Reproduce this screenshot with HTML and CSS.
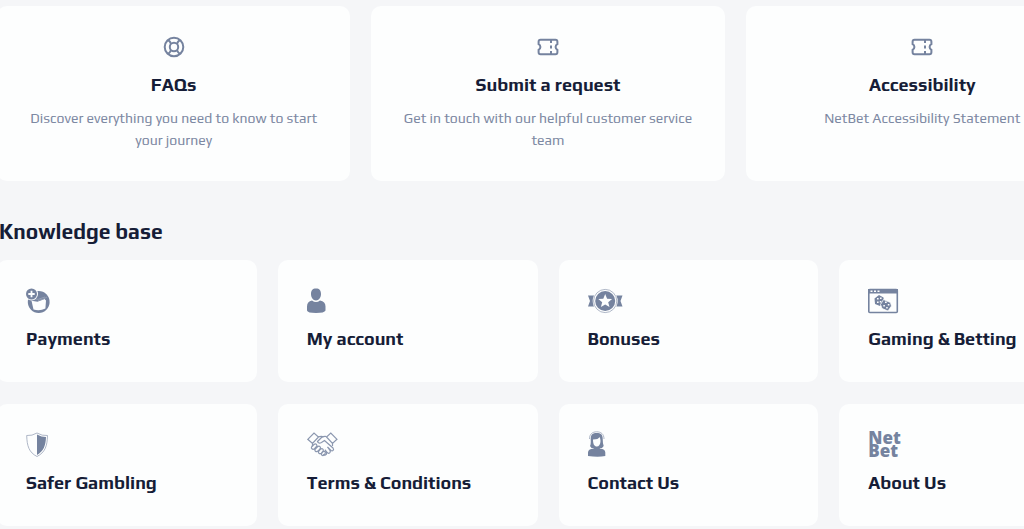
FILE: index.html
```
<!DOCTYPE html>
<html lang="en">
<head>
<meta charset="utf-8">
<title>Help Centre</title>
<link rel="stylesheet" href="styles.css">
</head>
<body>
<main class="page">
  <nav class="quick" aria-label="Quick links">
    <a class="card quick-card" href="#faqs">
      <svg class="quick-icon" viewBox="0 0 24 24" aria-hidden="true"><circle cx="12" cy="12" r="9.3"/><circle cx="12" cy="12" r="4.2"/><path d="M5.7 5.3Q7.8 5.6 9 9M18.3 5.3Q16.2 5.6 15 9M5.7 18.7Q7.8 18.4 9 15M18.3 18.7Q16.2 18.4 15 15"/></svg>
      <h2 class="card-title">FAQs</h2>
      <p class="card-text">Discover everything you need to know to start your journey</p>
    </a>
    <a class="card quick-card" href="#request">
      <svg class="quick-icon" viewBox="0 0 24 24" aria-hidden="true"><path d="M4.500 4.700h15q1.900 0 1.900 2v2.500c-2.400 1.200-2.400 4.400 0 5.600v2.500q0 2-1.900 2h-15q-1.900 0-1.900-2v-2.500c2.400-1.200 2.400-4.400 0-5.600V6.700q0-2 1.900-2z"/><path d="M15 5v3M15 10.500v3M15 16v3"/></svg>
      <h2 class="card-title">Submit a request</h2>
      <p class="card-text">Get in touch with our helpful customer service team</p>
    </a>
    <a class="card quick-card" href="#accessibility">
      <svg class="quick-icon" viewBox="0 0 24 24" aria-hidden="true"><path d="M4.500 4.700h15q1.900 0 1.900 2v2.500c-2.400 1.200-2.400 4.400 0 5.600v2.500q0 2-1.900 2h-15q-1.900 0-1.900-2v-2.500c2.400-1.200 2.400-4.400 0-5.600V6.700q0-2 1.900-2z"/><path d="M15 5v3M15 10.500v3M15 16v3"/></svg>
      <h2 class="card-title">Accessibility</h2>
      <p class="card-text">NetBet Accessibility Statement</p>
    </a>
  </nav>

  <h1 class="section-title">Knowledge base</h1>

  <nav class="topics" aria-label="Knowledge base">
    <a class="card topic-card" href="#payments">
      <svg class="topic-icon" viewBox="0 0 40 28" aria-hidden="true">
        <circle class="fill" cx="12.700" cy="15" r="10.900"/>
        <path class="white" d="M5.500 13.800l6 1 7-2.800 1.500 1.500-.6 8Q14 24.200 7.500 22.500z"/>
        <path class="thin" d="M5.500 12q7 1.500 13.500-2M12 13.500q5-.5 9-3.500"/>
        <circle class="white" cx="5.500" cy="7" r="6.500"/><circle class="fill" cx="5.500" cy="7" r="5.500"/>
        <path class="plus" d="M5.500 3.800v6.400M2.300 7h6.400"/>
      </svg>
      <h2 class="card-title">Payments</h2>
    </a>
    <a class="card topic-card" href="#account">
      <svg class="topic-icon" viewBox="0 0 40 28" aria-hidden="true">
        <path class="fill" d="M9 1.500c3.500 0 5 2 5 5.500s-2 6.500-5 6.500-5-3-5-6.500 1.500-5.500 5-5.500zM5 13.500q4 3 8 0 5.500 1 5.500 6v4q-1 2.500-9.500 2.500T0 23.500v-4q0-5 5-6z"/>
      </svg>
      <h2 class="card-title">My account</h2>
    </a>
    <a class="card topic-card" href="#bonuses">
      <svg class="topic-icon" viewBox="0 0 40 28" aria-hidden="true">
        <path class="fill" d="M0 8.500h9v11H0l2-5.500zM34.500 8.500h-9v11h9l-2-5.500z"/>
        <circle class="white" cx="17.200" cy="14" r="12.500"/><circle class="thin" cx="17.200" cy="14" r="11.600"/><circle class="fill" cx="17.200" cy="14" r="10"/>
        <path class="white" d="M17.200 7l1.900 4.700 5 .3-3.900 3.200 1.300 4.900-4.300-2.700-4.300 2.700 1.300-4.900-3.900-3.200 5-.3z"/>
      </svg>
      <h2 class="card-title">Bonuses</h2>
    </a>
    <a class="card topic-card" href="#gaming">
      <svg class="topic-icon" viewBox="0 0 40 28" aria-hidden="true">
        <rect class="frame" x=".8" y="2.500" width="28.500" height="23" rx="1"/><path class="fill" d="M0 2h30v4.500H0z"/>
        <path class="dots" d="M2.500 4.200h2M6 4.200h2M9.500 4.200h2"/>
        <path class="fill" d="M6.500 11.500L11 8l4.500 2.500.5 4-4 4.500-5-2z"/>
        <path class="white" d="M9 11h1.600v1.500H9zM12 10.500h1.600V12H12zM9 14.500h1.600V16H9zM11.800 14h1.500v1.500h-1.500z"/>
        <path class="fill seam" d="M15.500 12.500l7 3 1 3.500-3.500 5-6-2.500-1.500-4z"/>
        <path class="white" d="M17 14.500h1.700v1.600H17zM19.800 17h1.600v1.600h-1.600zM15.300 18h1.600v1.600h-1.600zM18.200 20h1.500v1.500h-1.500z"/>
      </svg>
      <h2 class="card-title">Gaming &amp; Betting</h2>
    </a>
    <a class="card topic-card" href="#safer-gambling">
      <svg class="topic-icon" viewBox="0 0 40 28" aria-hidden="true">
        <path class="thin" d="M11 2Q6 5 .7 4.500C1 15 3 21.500 11 25.500 19 21.500 21.300 15 21.500 4.500Q16 5 11 2z"/>
        <path class="fill" d="M11 3.500q4.500 2.500 9 2.500c-.3 9-2.500 14-9 18z"/>
      </svg>
      <h2 class="card-title">Safer Gambling</h2>
    </a>
    <a class="card topic-card" href="#terms">
      <svg class="topic-icon" viewBox="0 0 40 28" aria-hidden="true">
        <path class="line" d="M.8 8.300L7 2l4.500 4L5.500 12.500zM30 8.300L23.800 2 19.500 6l6 6.500zM11 6q3-1.200 6-.2M5.500 12.500v3M25.500 12.500v2.500"/>
        <path class="line" d="M19.500 5.500q-3-.5-5 1l-4 4q1 2.500 4 1l3-2 8.500 7.500c1.500 2-.5 3.500-2 2.500l-3.500-3.500 2.500 3.500c1 2-1 3.500-2.500 2.300l-2.500-3 1.500 3c.5 2-2 3-3.500 1.500"/>
        <path class="line" d="M7 13.500c2-1.500 3.800.5 2.500 2l-2 2.200c-2 1.500-4-.5-2.700-2.200zM10.500 15.800c2-1.500 3.800.5 2.500 2l-2 2.300c-2 1.500-4-.5-2.700-2zM13.500 18.200c2-1.300 3.500.5 2.500 2l-1.600 2c-2 1.300-3.800-.5-2.600-2zM16 20.700c2-.8 3 .6 2 2l-1 1.300c-1.500 1.300-3.200-.2-2.500-1.500z"/>
      </svg>
      <h2 class="card-title">Terms &amp; Conditions</h2>
    </a>
    <a class="card topic-card" href="#contact">
      <svg class="topic-icon" viewBox="0 0 40 28" aria-hidden="true">
        <path class="fill" d="M3.500 17L2 15q1-1.500.7-7c0-4.500 2-6 6-6s6 1.500 6 6q0 5 1 7l-1.700 2z"/>
        <path class="white" d="M5 8.500q5.500 0 6.500-2.500 1 1.500 1 4c0 3.500-1.500 5.500-3.700 5.500S5 13.500 5 8.500z"/>
        <path class="thin" d="M1.500 8C1.500 3 4.500.8 8.700.8S16 3 16 8"/>
        <path class="fill" d="M6.500 16h4.500l1 1.500q5.300.5 5.300 4V25q-7 1.500-17.300 0v-3.500q0-3.500 5.500-4z"/>
      </svg>
      <h2 class="card-title">Contact Us</h2>
    </a>
    <a class="card topic-card" href="#about">
      <span class="wordmark">Net<br>Bet</span>
      <h2 class="card-title">About Us</h2>
    </a>
  </nav>
</main>
</body>
</html>
```
FILE: styles.css
```
* { box-sizing: border-box; }
body {
  margin: 0;
  overflow: hidden;
  background: #f5f6f8;
  color: #161d37;
  font-family: Play, "Noto Sans", sans-serif;
}
.page { margin: 0 -75px 0 -3px; padding: 6px 0; }
.quick, .topics { display: grid; gap: 22px 21px; }
.quick { grid-template-columns: repeat(3, 1fr); }
.topics { grid-template-columns: repeat(4, 1fr); }
.card {
  display: flex;
  flex-direction: column;
  border-radius: 10px;
  background: #fdfefe;
  color: inherit;
  text-decoration: none;
}
.quick-card { align-items: center; padding: 28px 29px 30px; text-align: center; }
.topic-card { align-items: flex-start; padding: 27px 29px 31px; }
.card-title { margin: 0; font-size: 18px; line-height: 24px; font-weight: 700; white-space: nowrap; }
.card-text {
  margin: 10px 0 0;
  color: #7d89a3;
  font-size: 14px;
  line-height: 22px;
}
.section-title { margin: 34px 0 12px; padding-left: 2px; font-size: 21px; line-height: 33px; }
.quick-icon {
  width: 24px;
  height: 24px;
  margin: 1px 0 14px;
  fill: none;
  stroke: #75839f;
  stroke-width: 2;
}
.topic-icon { width: 40px; height: 28px; margin-bottom: 12px; fill: none; }
.fill { fill: #75839f; }
.white { fill: #fdfefe; }
.seam { stroke: #fdfefe; stroke-width: 0.8; }
.thin { stroke: #9aa5b9; stroke-width: 0.8; }
.line { stroke: #8b97af; stroke-width: 1.2; }
.frame { stroke: #75839f; stroke-width: 1.6; }
.plus { stroke: #fdfefe; stroke-width: 1.8; }
.dots { stroke: #fdfefe; stroke-width: 1.5; }
.wordmark {
  height: 28px;
  margin-bottom: 12px;
  color: #75839f;
  font-family: "Open Sans", sans-serif;
  font-size: 17px;
  font-weight: 800;
  line-height: 13px;
}
```
